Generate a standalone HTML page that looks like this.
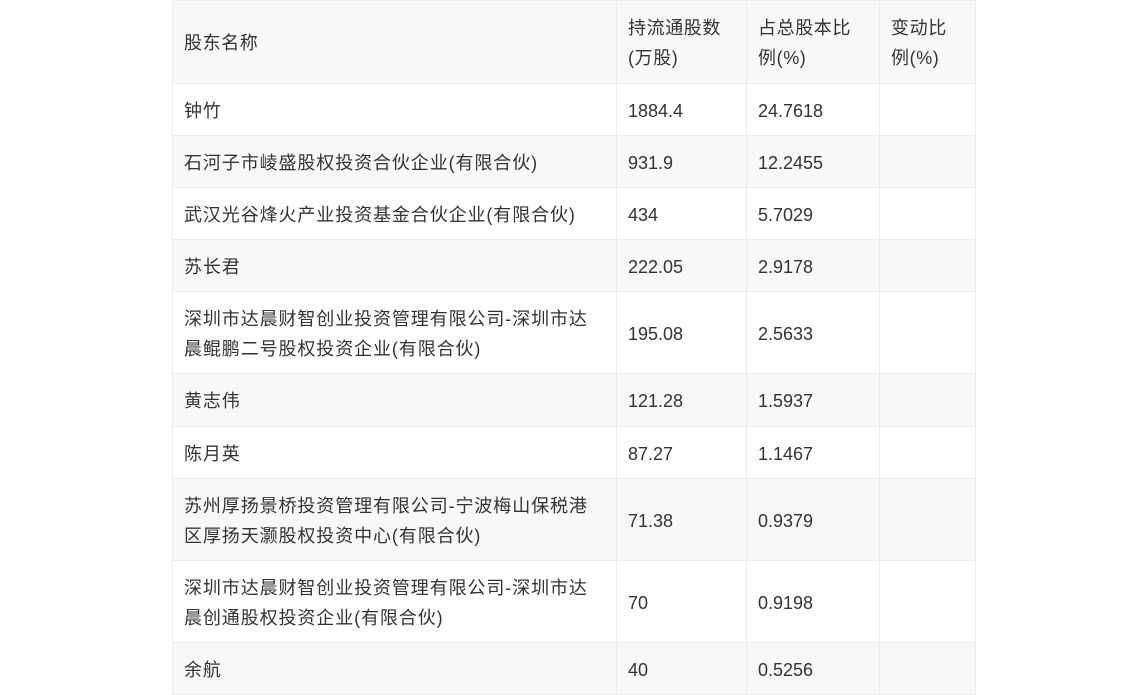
<!DOCTYPE html>
<html><head><meta charset="utf-8"><style>
html,body{margin:0;padding:0;background:#fff;width:1148px;height:695px;overflow:hidden}
table{position:absolute;left:172px;top:0;border-collapse:collapse;table-layout:fixed;width:803px;font-family:"Liberation Sans","Noto Sans CJK SC",sans-serif;font-size:18px;color:#333}
td{border:1px solid #ececec;padding:2px 0 0 11px;vertical-align:middle;line-height:30px;white-space:nowrap;overflow:hidden}
td:first-child{letter-spacing:0.9px}
tr:first-child td{letter-spacing:0.6px}
tr:nth-child(odd) td{background:#f8f8f8}
tr:nth-child(even) td{background:#fff}
</style></head><body>
<table>
<colgroup><col style="width:444px"><col style="width:130px"><col style="width:133px"><col style="width:96px"></colgroup>
<tr style="height:83px"><td>股东名称</td><td>持流通股数<br>(万股)</td><td>占总股本比<br>例(%)</td><td>变动比<br>例(%)</td></tr>
<tr style="height:52px"><td>钟竹</td><td>1884.4</td><td>24.7618</td><td></td></tr>
<tr style="height:52px"><td>石河子市崚盛股权投资合伙企业(有限合伙)</td><td>931.9</td><td>12.2455</td><td></td></tr>
<tr style="height:52px"><td>武汉光谷烽火产业投资基金合伙企业(有限合伙)</td><td>434</td><td>5.7029</td><td></td></tr>
<tr style="height:52px"><td>苏长君</td><td>222.05</td><td>2.9178</td><td></td></tr>
<tr style="height:82px"><td>深圳市达晨财智创业投资管理有限公司-深圳市达<br>晨鲲鹏二号股权投资企业(有限合伙)</td><td>195.08</td><td>2.5633</td><td></td></tr>
<tr style="height:53px"><td>黄志伟</td><td>121.28</td><td>1.5937</td><td></td></tr>
<tr style="height:52px"><td>陈月英</td><td>87.27</td><td>1.1467</td><td></td></tr>
<tr style="height:82px"><td>苏州厚扬景桥投资管理有限公司-宁波梅山保税港<br>区厚扬天灏股权投资中心(有限合伙)</td><td>71.38</td><td>0.9379</td><td></td></tr>
<tr style="height:82px"><td>深圳市达晨财智创业投资管理有限公司-深圳市达<br>晨创通股权投资企业(有限合伙)</td><td>70</td><td>0.9198</td><td></td></tr>
<tr style="height:52px"><td>余航</td><td>40</td><td>0.5256</td><td></td></tr>
</table>
</body></html>
